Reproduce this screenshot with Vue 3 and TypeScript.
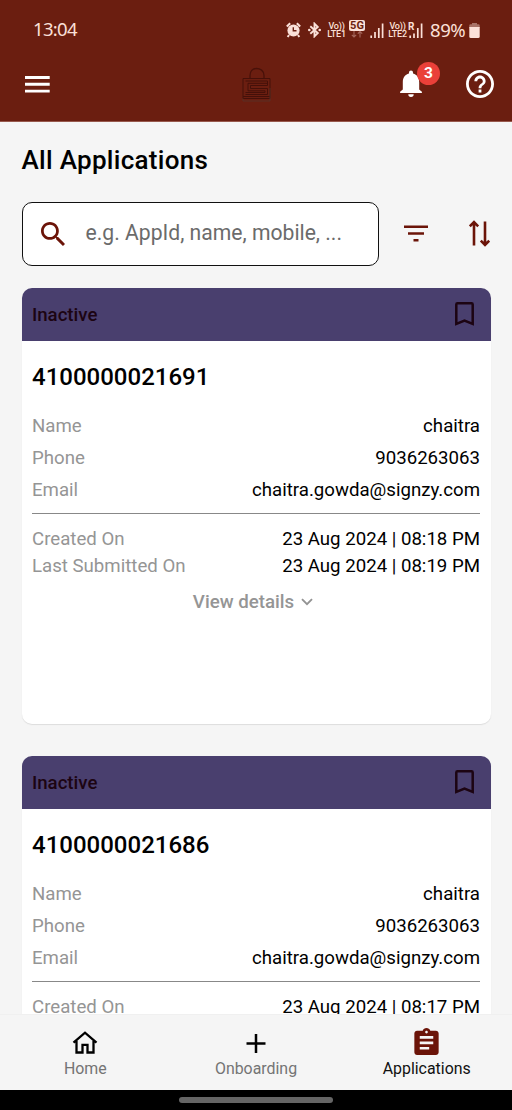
<script setup lang="ts">
interface Row {
  label: string
  value: string
}
interface Application {
  id: string
  status: string
  contact: Row[]
  dates: Row[]
}

const makeApplication = (id: string, created: string, submitted: string): Application => ({
  id,
  status: 'Inactive',
  contact: [
    { label: 'Name', value: 'chaitra' },
    { label: 'Phone', value: '9036263063' },
    { label: 'Email', value: 'chaitra.gowda@signzy.com' },
  ],
  dates: [
    { label: 'Created On', value: created },
    { label: 'Last Submitted On', value: submitted },
  ],
})

const applications: Application[] = [
  makeApplication('4100000021691', '23 Aug 2024 | 08:18 PM', '23 Aug 2024 | 08:19 PM'),
  makeApplication('4100000021686', '23 Aug 2024 | 08:17 PM', '23 Aug 2024 | 08:17 PM'),
]
</script>

<template>
  <div class="screen">
    <header class="top">
      <div class="status">
        <span class="clock">13:04</span>
        <div class="indicators">
          <svg class="alarm" viewBox="0 0 15 16">
            <circle cx="7.5" cy="8.5" r="6.1" fill="currentColor" />
            <path d="M.8 4.400 4.200 1.200M14.200 4.400 10.800 1.200M3 13l-1.300 2M12 13l1.300 2" stroke="currentColor" stroke-width="2" fill="none" />
            <path d="M7.300 5.200v3.600h3.200" stroke="#6b1e10" stroke-width="1.400" fill="none" />
          </svg>
          <svg class="bluetooth" viewBox="0 0 13 16">
            <path d="M2.300 4.300 9.800 11 6.500 14.300V1.700L9.800 5 2.300 11.700" stroke="currentColor" stroke-width="1.900" fill="none" />
            <circle cx="1.300" cy="8" r="1.300" fill="currentColor" /><circle cx="11.700" cy="8" r="1.300" fill="currentColor" />
          </svg>
          <span class="lte"><span>Vo))</span><span>LTE1</span></span>
          <span class="fiveg">
            <span class="fiveg-box">5G</span>
            <svg viewBox="0 0 12 7"><path d="M3 0v6M.8 3.800 3 6l2.200-2.200M9 6.500v-6M6.800 2.700 9 .5l2.200 2.200" stroke="currentColor" fill="none" stroke-width="1.100" /></svg>
          </span>
          <svg class="signal" viewBox="0 0 14 15"><path d="M1.200 12.500V15M5 9v6M8.800 5v10M12.600.5V15" stroke="currentColor" stroke-width="1.700" /></svg>
          <span class="lte lte2"><span>Vo))</span><span>LTE2</span></span>
          <span class="roaming">
            <svg viewBox="0 0 14 15"><path d="M1.200 12.500V15M5 10.500V15M8.800 5v10M12.600.5V15" stroke="currentColor" stroke-width="1.700" /></svg>
            <b>R</b>
          </span>
          <span class="percent">89%</span>
          <svg class="battery" viewBox="0 0 11 15"><path d="M3 0h5v1.200h1.500A1.300 1.300 0 0 1 10.700 2.500V5H.3V2.500a1.300 1.300 0 0 1 1.300-1.300H3z" fill="#a87267" /><path d="M.3 4h10.400v9.500q0 1.500-1.500 1.500H1.800q-1.500 0-1.500-1.500z" fill="currentColor" /></svg>
        </div>
      </div>
      <div class="appbar">
        <svg class="menu" viewBox="0 0 25 18"><path d="M0 2.500h24.700M0 9.300h24.700M0 16.100h24.700" stroke="#fff" stroke-width="2.900" /></svg>
        <svg class="lock" viewBox="0 0 30 36">
          <path d="M8 11V8.500C8 3.500 11 1.500 14.500 1.500S22 3.500 22 8.500V11" fill="none" stroke="#481109" stroke-width="1.300" />
          <path d="M1 11.500h27v20H1zM3.500 14h22v4.500h-17v3h17v6h-22M25.500 16.300H6v7.500h17v1.700H3.500M1 29.500h27" fill="none" stroke="#451009" stroke-width="1" />
          <path d="M1 31.500V34h27V21" fill="none" stroke="#54362f" stroke-width=".7" />
        </svg>
        <div class="bell">
          <svg viewBox="0 0 22 28"><path d="M11 27a2.700 2.700 0 0 0 2.700-2.700H8.300A2.700 2.700 0 0 0 11 27zM19.200 19.500v-7.300c0-4.200-2.200-7.700-6.150-8.600v-.95a2.050 2.050 0 0 0-4.100 0v.95C5 4.500 2.800 8 2.800 12.200v7.300L.1 21.800v1.300h21.800v-1.300z" fill="#fff" /></svg>
          <span class="badge">3</span>
        </div>
        <svg class="help" viewBox="2 2 20 20"><path fill="#fff" d="M11 18h2v-2h-2v2zm1-16C6.480 2 2 6.480 2 12s4.480 10 10 10 10-4.480 10-10S17.520 2 12 2zm0 18c-4.410 0-8-3.590-8-8s3.590-8 8-8 8 3.590 8 8-3.590 8-8 8zm0-14c-2.210 0-4 1.790-4 4h2c0-1.100.9-2 2-2s2 .9 2 2c0 2-3 1.750-3 5h2c0-2.250 3-2.500 3-5 0-2.210-1.790-4-4-4z" /></svg>
      </div>
    </header>

    <main class="content">
      <h1>All Applications</h1>
      <div class="tools">
        <div class="search">
          <svg viewBox="3 3 17.490 17.490"><path fill="#6b1408" d="M15.500 14h-.79l-.28-.27C15.410 12.590 16 11.110 16 9.500 16 5.910 13.090 3 9.500 3S3 5.910 3 9.500 5.910 16 9.500 16c1.610 0 3.090-.59 4.230-1.570l.27.28v.79l5 4.990L20.490 19l-4.990-5zm-6 0C7.010 14 5 11.990 5 9.500S7.010 5 9.500 5 14 7.010 14 9.500 11.990 14 9.500 14z" /></svg>
          <span>e.g. AppId, name, mobile, ...</span>
        </div>
        <svg class="filter" viewBox="0 0 24 17"><path d="M0 1.800h24M4 8.500h16M9.500 15.200h5" stroke="#6b1408" stroke-width="2.400" /></svg>
        <svg class="sort" viewBox="0 0 21 27"><path d="M5 25.500V3M.8 6.300 5 2.100l4.200 4.200M16 1.500V24M11.800 20.700 16 24.900l4.200-4.200" fill="none" stroke="#6b1408" stroke-width="2.600" /></svg>
      </div>

      <article v-for="app in applications" :key="app.id" class="card">
        <div class="card-head">
          <span>{{ app.status }}</span>
          <svg viewBox="0 0 19 24"><path d="M1.300 2.500q0-1.200 1.200-1.200h14q1.200 0 1.200 1.200v19.400L9.500 18.500 1.300 21.900z" fill="none" stroke="#1c0412" stroke-width="2.500" /></svg>
        </div>
        <div class="card-body">
          <h2>{{ app.id }}</h2>
          <div v-for="row in app.contact" :key="row.label" class="row">
            <span class="label">{{ row.label }}</span><span>{{ row.value }}</span>
          </div>
          <hr />
          <div v-for="row in app.dates" :key="row.label" class="row date">
            <span class="label">{{ row.label }}</span><span>{{ row.value }}</span>
          </div>
          <div class="details">
            <span>View details</span>
            <svg viewBox="0 0 12 8"><path d="m1 1.200 5 5 5-5" fill="none" stroke="#939393" stroke-width="1.900" /></svg>
          </div>
        </div>
      </article>
    </main>

    <nav class="tabs">
      <div class="tab">
        <svg class="home" viewBox="0 0 26 23"><path d="M4.500 10v11.500h6v-7.700h5v7.700h6V10M1.500 11.700 13 1.700l11.500 10" fill="none" stroke="#000" stroke-width="2.300" /></svg>
        <span>Home</span>
      </div>
      <div class="tab">
        <svg class="plus" viewBox="0 0 20 23"><path d="M.5 11.500h19M10 2v19" stroke="#000" stroke-width="2.500" /></svg>
        <span>Onboarding</span>
      </div>
      <div class="tab active">
        <svg class="clip" viewBox="3 1 18 20"><path fill="#6b1408" d="M19 3h-4.180C14.400 1.840 13.300 1 12 1c-1.300 0-2.400.84-2.820 2H5c-1.100 0-2 .9-2 2v14c0 1.100.9 2 2 2h14c1.100 0 2-.9 2-2V5c0-1.100-.9-2-2-2zm-7 0c.55 0 1 .45 1 1s-.45 1-1 1-1-.45-1-1 .45-1 1-1zm2 14H7v-2h7v2zm3-4H7v-2h10v2zm0-4H7V7h10v2z" /></svg>
        <span>Applications</span>
      </div>
    </nav>
    <footer class="gesture"><i></i></footer>
  </div>
</template>

<style>
body {
  margin: 0;
}
</style>

<style scoped>
* {
  box-sizing: border-box;
}
svg {
  display: block;
  flex: none;
}
.screen {
  width: 512px;
  height: 1110px;
  display: flex;
  flex-direction: column;
  overflow: hidden;
  background: #f5f5f5;
  font-family: Roboto, sans-serif;
  color: #000;
  white-space: nowrap;
}
.top {
  height: 122px;
  flex: none;
  background: #6b1e10;
  border-bottom: 1px solid #98594d;
}
.status {
  height: 58px;
  display: flex;
  justify-content: space-between;
  padding: 0 32px 0 33px;
  color: #fbe0d8;
}
.clock {
  font: 18.500px/58px "Noto Sans", sans-serif;
  letter-spacing: -0.7px;
}
.indicators {
  display: flex;
  align-items: center;
  padding-top: 2px;
}
.alarm {
  width: 15px;
  height: 16px;
}
.bluetooth {
  width: 13px;
  height: 16px;
  margin-left: 7px;
}
.lte {
  width: 19px;
  margin-left: 6px;
  display: flex;
  flex-direction: column;
  align-items: center;
  font: 500 9px/8px Roboto, sans-serif;
  letter-spacing: -0.2px;
}
.fiveg {
  width: 16px;
  height: 18px;
  margin: -2px 0 0 3px;
  display: flex;
  flex-direction: column;
  align-items: center;
}
.fiveg-box {
  width: 16px;
  height: 11px;
  border-radius: 2px;
  background: #fbe0d8;
  color: #6b1e10;
  text-align: center;
  font: 700 11px/11px Roboto, sans-serif;
}
.fiveg svg {
  width: 12px;
  height: 7px;
  color: #a4675c;
}
.signal {
  width: 14px;
  height: 15px;
  margin-left: 5px;
}
.lte2 {
  margin-left: 4px;
}
.roaming {
  position: relative;
  margin-left: 2px;
}
.roaming svg {
  width: 14px;
  height: 15px;
}
.roaming b {
  position: absolute;
  left: -1px;
  top: -1px;
  font: 700 10px/9px Roboto, sans-serif;
}
.percent {
  width: 36px;
  margin-left: 7px;
  font: 18.500px/20px "Noto Sans", sans-serif;
  letter-spacing: -0.4px;
}
.battery {
  width: 11px;
  height: 15px;
  margin-left: 3px;
}
.appbar {
  height: 52px;
  display: flex;
  align-items: center;
  padding: 0 18px 0 25px;
}
.menu {
  width: 25px;
  height: 18px;
}
.lock {
  width: 30px;
  height: 36px;
  margin: 2px 0 0 192px;
}
.bell {
  position: relative;
  margin-left: 128px;
}
.bell svg {
  width: 22px;
  height: 28px;
}
.badge {
  position: absolute;
  left: 17px;
  top: -8px;
  width: 23px;
  height: 23px;
  border-radius: 50%;
  background: #ea4039;
  color: #fff;
  text-align: center;
  font: 700 15.500px/23px Roboto, sans-serif;
}
.help {
  width: 28px;
  height: 28px;
  margin-left: auto;
}
.content {
  flex: 1;
  min-height: 0;
  overflow: hidden;
  padding: 0 21.500px;
}
h1 {
  margin: 20px 0 0;
  height: 36px;
  font-size: 26px;
  line-height: 36px;
  font-weight: 500;
  letter-spacing: 0.3px;
}
.tools {
  display: flex;
  align-items: center;
  margin: 24px 0 22px;
}
.search {
  width: 357px;
  height: 63.500px;
  display: flex;
  align-items: center;
  border: 1.200px solid #111;
  border-radius: 10px;
  background: #fff;
  padding-left: 18px;
  color: #6b6b6b;
  font-size: 21.150px;
}
.search svg {
  width: 24px;
  height: 24px;
}
.search span {
  margin-left: 21px;
  margin-top: -3px;
}
.filter {
  width: 24px;
  height: 17px;
  margin-left: 25px;
}
.sort {
  width: 21px;
  height: 27px;
  margin-left: 41.500px;
}
.card {
  height: 436px;
  margin-bottom: 32px;
  border-radius: 10px;
  background: #fff;
  overflow: hidden;
  box-shadow: 0 1px 1px #ddd;
}
.card-head {
  height: 53px;
  display: flex;
  align-items: center;
  justify-content: space-between;
  padding: 0 17px 0 10.500px;
  background: #493f6e;
  color: #1c0412;
  font-size: 18.600px;
  font-weight: 500;
}
.card-head svg {
  width: 19px;
  height: 24px;
}
.card-head span {
  padding-top: 1px;
}
.card-body {
  padding: 0 10.500px;
}
h2 {
  margin: 20px 0 17px;
  font-size: 24px;
  line-height: 32px;
  font-weight: 500;
}
.row {
  height: 32px;
  display: flex;
  justify-content: space-between;
  align-items: center;
  font-size: 18.650px;
  line-height: 26px;
}
.label {
  color: #959595;
}
hr {
  height: 1px;
  margin: 7px 0 12px;
  border: 0;
  background: #888;
}
.date {
  height: 27px;
}
.details {
  display: flex;
  align-items: center;
  justify-content: center;
  gap: 7px;
  height: 26px;
  margin-top: 9px;
  padding-right: 6px;
  color: #959595;
  font-size: 18.700px;
  font-weight: 500;
}
.details svg {
  width: 12px;
  height: 8px;
}
.tabs {
  flex: none;
  height: 76px;
  display: flex;
  background: #f5f5f5;
  border-top: 1px solid #f0f0f0;
}
.tab {
  flex: 1;
  display: flex;
  flex-direction: column;
  align-items: center;
  color: #747474;
  font-size: 15.900px;
  line-height: 20px;
}
.tab span {
  margin-top: auto;
  margin-bottom: 11px;
}
.active {
  color: #111;
}
.home {
  width: 26px;
  height: 23px;
  margin-top: 16px;
}
.plus {
  width: 20px;
  height: 23px;
  margin-top: 17px;
}
.clip {
  width: 25px;
  height: 27px;
  margin-top: 13px;
}
.gesture {
  flex: none;
  height: 20px;
  background: #000;
  display: flex;
  align-items: center;
  justify-content: center;
}
.gesture i {
  width: 154px;
  height: 6px;
  border-radius: 3px;
  background: #666;
}
</style>
